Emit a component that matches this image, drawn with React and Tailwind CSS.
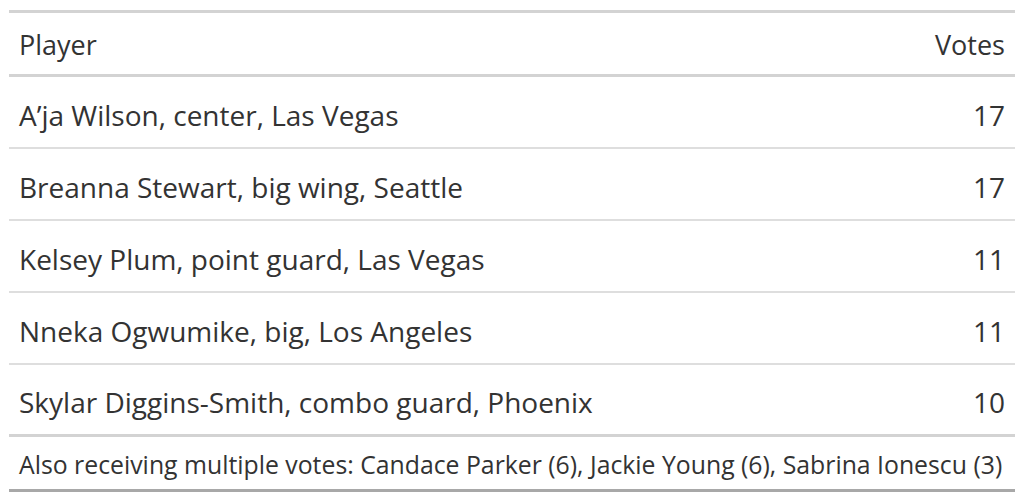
const rows = [
  ['A\u2019ja Wilson, center, Las Vegas', 17],
  ['Breanna Stewart, big wing, Seattle', 17],
  ['Kelsey Plum, point guard, Las Vegas', 11],
  ['Nneka Ogwumike, big, Los Angeles', 11],
  ['Skylar Diggins-Smith, combo guard, Phoenix', 10],
];

export default function App() {
  return (
    <div className="w-[1024px] h-[502px] bg-white pt-[10px] pl-[9px] text-[#333333] font-['Open_Sans',sans-serif]">
      <div className="w-[1006px] border-t-[3px] border-b-[3px] border-t-[#d3d3d3] border-b-[#a8a8a8]">
        <div className="flex items-center justify-between h-[64px] px-[10px] pt-[4px] text-[27px] border-b-[3px] border-[#d3d3d3]">
          <span>Player</span>
          <span>Votes</span>
        </div>
        {rows.map(([name, votes], i) => (
          <div
            key={name}
            className={`flex items-center justify-between h-[72px] px-[10px] pt-[5px] text-[28px] ${
              i < rows.length - 1 ? 'border-b-2 border-[#dedede]' : 'border-b-[3px] border-[#d3d3d3]'
            }`}
          >
            <span>{name}</span>
            <span>{votes}</span>
          </div>
        ))}
        <div className="flex items-center h-[52px] px-[10px] pt-[3px] text-[24.8px] whitespace-nowrap">
          Also receiving multiple votes: Candace Parker (6), Jackie Young (6), Sabrina Ionescu (3)
        </div>
      </div>
    </div>
  );
}
